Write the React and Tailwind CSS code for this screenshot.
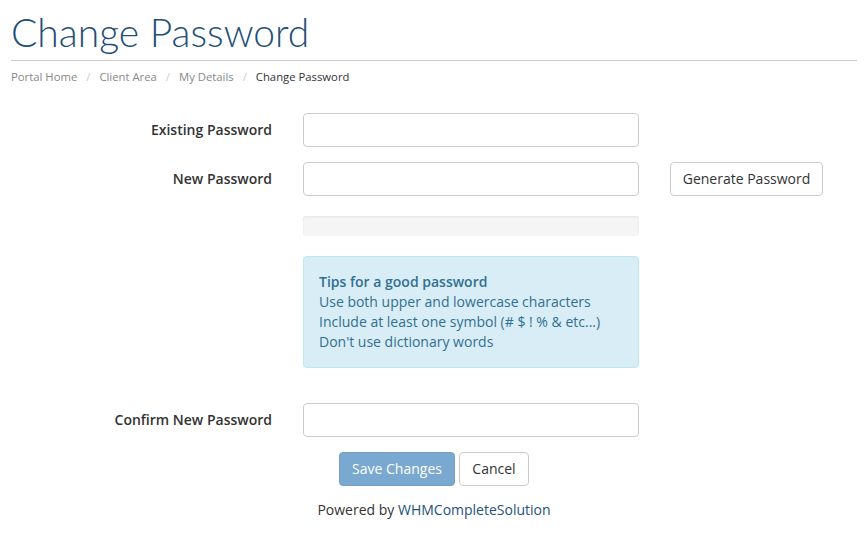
export default function App() {
  const rowLabel = "w-[261px] shrink-0 pb-[2px] text-right text-[14px] font-semibold text-[#333]";
  const input =
    "w-[336px] h-[34px] shrink-0 rounded-[4px] border border-[#ccc] bg-white px-3 text-[14px] outline-none";

  return (
    <div className="min-h-[557px] w-[868px] bg-white px-[11px] font-['Open_Sans',sans-serif] text-[14px] text-[#333]">
      {/* Header */}
      <h1 className="pt-[12px] font-['Lato',sans-serif] text-[39px] font-light leading-[40px] text-[#1f5078]">
        Change Password
      </h1>
      <div className="mt-[8px] w-[846px] border-t border-[#ccc]" />

      {/* Breadcrumb */}
      <nav className="mt-[8px] flex items-center text-[11.3px] leading-[16px] text-[#888]">
        <span>Portal Home</span>
        <span className="px-[9px] text-[#ccc]">/</span>
        <span>Client Area</span>
        <span className="px-[9px] text-[#ccc]">/</span>
        <span>My Details</span>
        <span className="px-[9px] text-[#ccc]">/</span>
        <span className="text-[#333]">Change Password</span>
      </nav>

      {/* Form */}
      <div className="mt-[28px] flex flex-col">
        <div className="flex items-center gap-[31px]">
          <label className={rowLabel}>Existing Password</label>
          <input type="password" className={input} />
        </div>

        <div className="mt-[15px] flex items-center gap-[31px]">
          <label className={rowLabel}>New Password</label>
          <input type="password" className={input} />
          <button className="h-[34px] w-[153px] rounded-[4px] border border-[#ccc] bg-white pb-[2px] text-[14px] text-[#333]">
            Generate Password
          </button>
        </div>

        <div className="ml-[292px] mt-[20px] h-[20px] w-[336px] rounded-[3px] bg-[#f5f5f5] shadow-[inset_0_1px_2px_rgba(0,0,0,0.08)]" />

        <div className="ml-[292px] mt-[20px] h-[112px] w-[336px] rounded-[4px] border border-[#bce8f1] bg-[#d9edf7] px-[15px] pt-[15px] text-[14px] leading-[20px] text-[#31708f]">
          <div className="font-semibold">Tips for a good password</div>
          <div>Use both upper and lowercase characters</div>
          <div>Include at least one symbol (# $ ! % &amp; etc...)</div>
          <div>Don't use dictionary words</div>
        </div>

        <div className="mt-[35px] flex items-center gap-[31px]">
          <label className={rowLabel}>Confirm New Password</label>
          <input type="password" className={input} />
        </div>

        <div className="mt-[15px] flex justify-center gap-[4px]">
          <button className="h-[34px] w-[116px] rounded-[4px] border border-[#2e6da4] bg-[#337ab7] pb-[2px] text-[14px] text-white opacity-65">
            Save Changes
          </button>
          <button className="h-[34px] w-[70px] rounded-[4px] border border-[#ccc] bg-white pb-[2px] text-[14px] text-[#333]">
            Cancel
          </button>
        </div>

        <p className="mt-[14px] text-center text-[14px] leading-[20px] text-[#333]">
          Powered by <span className="text-[#23527c]">WHMCompleteSolution</span>
        </p>
      </div>
    </div>
  );
}
